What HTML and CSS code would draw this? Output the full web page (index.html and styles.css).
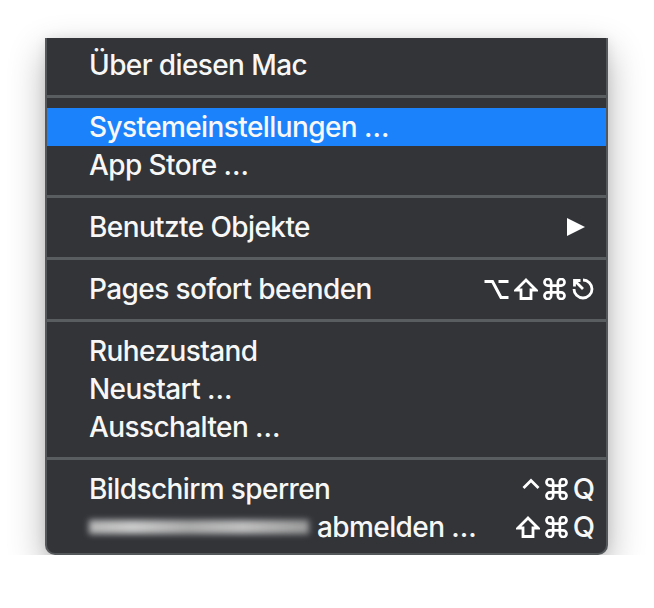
FILE: index.html
```html
<!DOCTYPE html>
<html lang="de">
<head>
<meta charset="utf-8">
<title>Apple-Menü</title>
<link rel="stylesheet" href="styles.css">
</head>
<body>
<div class="page">
  <div class="menu">
    <div class="item"><span class="label">Über diesen Mac</span></div>
    <div class="sep"></div>
    <div class="item active"><span class="label">Systemeinstellungen …</span></div>
    <div class="item"><span class="label">App Store …</span></div>
    <div class="sep"></div>
    <div class="item">
      <span class="label">Benutzte Objekte</span>
      <span class="keys arrow">
        <svg width="18" height="18" viewBox="0 0 18 18"><polygon points="0,0 18,9 0,18" fill="#fff"/></svg>
      </span>
    </div>
    <div class="sep"></div>
    <div class="item">
      <span class="label">Pages sofort beenden</span>
      <span class="keys">
        <svg class="k-opt" width="25" height="21" viewBox="0 0 25 21"><path d="M0.5 2.5 H8.5 L17 18.5 H24.5 M14.5 2.5 H24.5" fill="none" stroke="#fff" stroke-width="3"/></svg>
        <svg class="k-shift" width="24" height="22" viewBox="0 0 24 22"><path d="M12 2 L22 12 H17 V20.5 H7 V12 H2 Z" fill="none" stroke="#fff" stroke-width="2.8" stroke-linejoin="miter"/></svg>
        <svg class="k-cmd" width="23" height="22" viewBox="0 0 23 23"><path d="M8 8 V4.5 A3.5 3.5 0 1 0 4.5 8 H18.5 A3.5 3.5 0 1 0 15 4.5 V18.5 A3.5 3.5 0 1 0 18.5 15 H4.5 A3.5 3.5 0 1 0 8 18.5 Z" fill="none" stroke="#fff" stroke-width="2.8"/></svg>
        <svg class="k-esc" width="24" height="24" viewBox="0 0 24 24"><path d="M12 3 A9 9 0 1 1 3 12" fill="none" stroke="#fff" stroke-width="2.8"/><path d="M3.5 9.5 V3.5 H9.5 M3.5 3.5 L12 12" fill="none" stroke="#fff" stroke-width="2.8"/></svg>
      </span>
    </div>
    <div class="sep"></div>
    <div class="item"><span class="label">Ruhezustand</span></div>
    <div class="item"><span class="label">Neustart …</span></div>
    <div class="item"><span class="label">Ausschalten …</span></div>
    <div class="sep"></div>
    <div class="item">
      <span class="label">Bildschirm sperren</span>
      <span class="keys">
        <svg class="k-ctrl" width="18" height="12" viewBox="0 0 18 12"><path d="M1.5 10 L9 2.5 L16.5 10" fill="none" stroke="#fff" stroke-width="2.8"/></svg>
        <svg class="k-cmd" width="23" height="22" viewBox="0 0 23 23"><path d="M8 8 V4.5 A3.5 3.5 0 1 0 4.5 8 H18.5 A3.5 3.5 0 1 0 15 4.5 V18.5 A3.5 3.5 0 1 0 18.5 15 H4.5 A3.5 3.5 0 1 0 8 18.5 Z" fill="none" stroke="#fff" stroke-width="2.8"/></svg>
        <span class="k-q">Q</span>
      </span>
    </div>
    <div class="item">
      <span class="label"><span class="blur" aria-hidden="true"></span>abmelden …</span>
      <span class="keys">
        <svg class="k-shift" width="24" height="22" viewBox="0 0 24 22"><path d="M12 2 L22 12 H17 V20.5 H7 V12 H2 Z" fill="none" stroke="#fff" stroke-width="2.8" stroke-linejoin="miter"/></svg>
        <svg class="k-cmd" width="23" height="22" viewBox="0 0 23 23"><path d="M8 8 V4.5 A3.5 3.5 0 1 0 4.5 8 H18.5 A3.5 3.5 0 1 0 15 4.5 V18.5 A3.5 3.5 0 1 0 18.5 15 H4.5 A3.5 3.5 0 1 0 8 18.5 Z" fill="none" stroke="#fff" stroke-width="2.8"/></svg>
        <span class="k-q">Q</span>
      </span>
    </div>
  </div>
</div>
</body>
</html>
```

FILE: styles.css
```css
html, body {
  margin: 0;
  background: #ffffff;
}

body {
  font-family: Inter, "Liberation Sans", sans-serif;
}

.page {
  padding: 38px 0 0 45px;
}

.menu {
  width: 563px;
  box-sizing: border-box;
  background: #323438;
  border: 2px solid #55585b;
  border-top: none;
  border-radius: 0 0 10px 10px;
  padding: 8px 0 7px;
  box-shadow: 0 14px 36px rgba(0, 0, 0, 0.3), 0 0 12px rgba(0, 0, 0, 0.08);
}

.item {
  height: 38px;
  display: flex;
  align-items: center;
  justify-content: space-between;
  padding: 0 11px 0 42px;
  color: #f7f7f7;
  font-size: 28px;
  font-weight: 500;
  letter-spacing: -0.6px;
  line-height: 38px;
  white-space: nowrap;
}

.item.active {
  background: #1b82fb;
}

.label {
  display: flex;
  align-items: center;
}

.sep {
  height: 24px;
  box-sizing: border-box;
  padding-top: 11px;
}

.sep::before {
  content: "";
  display: block;
  height: 3px;
  background: #5a5d60;
}

.keys {
  display: flex;
  align-items: center;
  gap: 5px;
}

.keys svg {
  display: block;
}

.arrow {
  padding-right: 10px;
}

.k-ctrl {
  margin-bottom: 10px;
}

.k-q {
  font-size: 29px;
  letter-spacing: 0;
  line-height: 38px;
}

.blur {
  display: inline-block;
  width: 220px;
  height: 14px;
  margin-right: 8px;
  background: linear-gradient(to right, #c4c4c4 0%, #dcdcdc 20%, #b9b9b9 45%, #d0d0d0 70%, #a5a5a5 100%);
  filter: blur(3px);
  opacity: 0.9;
}
```
